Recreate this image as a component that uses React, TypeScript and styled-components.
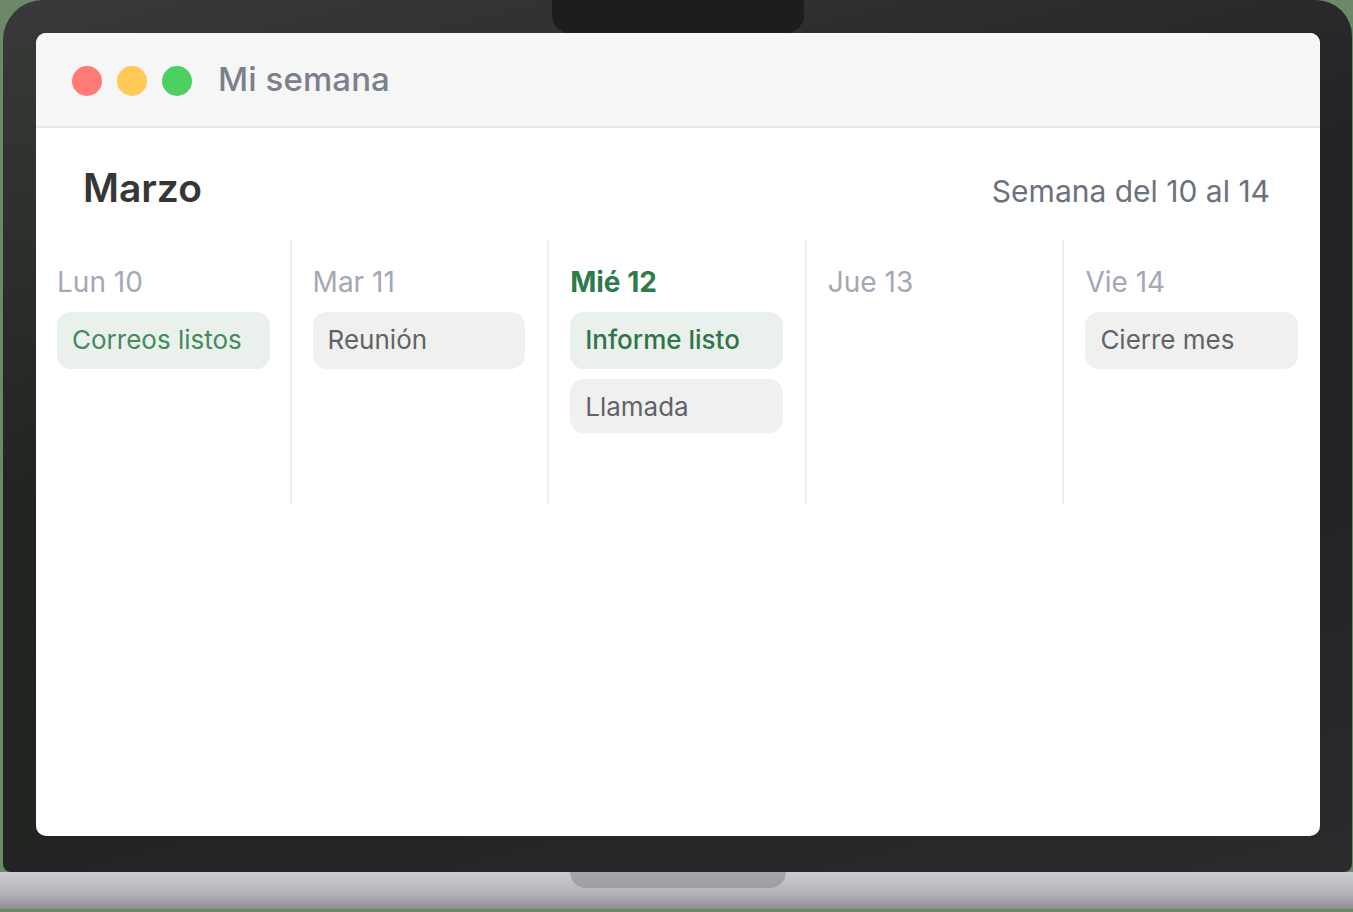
import React from "react";
import styled, { createGlobalStyle } from "styled-components";

const GlobalStyle = createGlobalStyle`
    html, body {
        margin: 0;
        padding: 0;
        background: #6b8966;
        font-family: Inter, "Noto Sans", "Liberation Sans", sans-serif;
    }
    #root {
        height: 912px;
        overflow: hidden;
    }
`;

const Laptop = styled.div`
    display: flex;
    flex-direction: column;
    height: 910px;
`;

const Lid = styled.div`
    position: relative;
    box-sizing: border-box;
    height: 872px;
    margin: 0 1px 0 3px;
    padding: 33px 32px 36px 33px;
    border-radius: 40px 36px 8px 8px;
    background: linear-gradient(165deg, #39393c 0%, #222224 42%, #232325 70%, #2b2b2d 100%);
    display: flex;
`;

const Notch = styled.div`
    position: absolute;
    top: 0;
    left: 50%;
    transform: translateX(-50%);
    width: 252px;
    height: 33px;
    background: #1d1d1f;
    border-radius: 0 0 18px 18px;
`;

const Screen = styled.div`
    flex: 1;
    display: flex;
    flex-direction: column;
    background: #ffffff;
    border-radius: 10px;
    overflow: hidden;
`;

const Base = styled.div`
    height: 37px;
    background: linear-gradient(to bottom, #cccbd0 0%, #b6b5bb 55%, #8e8d93 100%);
    display: flex;
    justify-content: center;
`;

const Groove = styled.div`
    width: 216px;
    height: 16px;
    margin-left: 3px;
    border-radius: 0 0 16px 16px;
    background: linear-gradient(to bottom, #a7a6ab, #9e9da2);
`;

const TitleBar = styled.div`
    display: flex;
    align-items: center;
    height: 95px;
    padding: 3px 36px 0;
    box-sizing: border-box;
    background: #f6f6f6;
    border-bottom: 2px solid #e6e6e6;
`;

const Light = styled.span<{ $color: string }>`
    width: 30px;
    height: 30px;
    border-radius: 50%;
    background: ${props => props.$color};
    & + & {
        margin-left: 15px;
    }
`;

const WindowTitle = styled.h1`
    margin: 0 0 5px 26px;
    font-size: 33px;
    font-weight: 500;
    color: #7b808c;
    letter-spacing: 0.1px;
`;

const Content = styled.div`
    display: flex;
    flex-direction: column;
    padding-top: 36px;
`;

const Header = styled.div`
    display: flex;
    justify-content: space-between;
    align-items: baseline;
    padding: 0 50px 0 47px;
`;

const Month = styled.h2`
    margin: 0;
    font-size: 39px;
    font-weight: 600;
    color: #363636;
`;

const Range = styled.span`
    font-size: 30px;
    color: #6b717d;
`;

const Week = styled.div`
    display: flex;
    height: 264px;
    margin-top: 29px;
`;

const Day = styled.div`
    flex: 1 1 0;
    min-width: 0;
    box-sizing: border-box;
    padding: 25px 20px 0 21px;

    & + & {
        border-left: 2px solid #ededed;
        padding: 25px 22px 0 21px;
    }
`;

const DayLabel = styled.div<{ $today?: boolean }>`
    margin-bottom: 13px;
    font-size: 28px;
    font-weight: ${props => props.$today ? 700 : 400};
    color: ${props => props.$today ? "#2e7a4c" : "#a3a8b4"};
`;

const Task = styled.div<{ $done?: boolean; $strong?: boolean }>`
    padding: 12px 15px 14px;
    border-radius: 14px;
    font-size: 26px;
    font-weight: ${props => props.$strong ? 500 : 400};
    background: ${props => props.$done ? "#eaf1ec" : "#f0f0ef"};
    color: ${props => props.$done ? (props.$strong ? "#2f7548" : "#458a5d") : "#5f636b"};
    white-space: nowrap;

    & + & {
        margin-top: 10px;
        padding-bottom: 11px;
    }
`;

type TaskItem = { label: string; done?: boolean };

type DayItem = { label: string; today?: boolean; tasks: Array<TaskItem> };

const days: Array<DayItem> = [
    { label: "Lun 10", tasks: [{ label: "Correos listos", done: true }] },
    { label: "Mar 11", tasks: [{ label: "Reunión" }] },
    { label: "Mié 12", today: true, tasks: [{ label: "Informe listo", done: true }, { label: "Llamada" }] },
    { label: "Jue 13", tasks: [] },
    { label: "Vie 14", tasks: [{ label: "Cierre mes" }] },
];

const App = (): JSX.Element =>
    <>
        <GlobalStyle />
        <Laptop>
            <Lid>
                <Notch />
                <Screen>
                    <TitleBar>
                        <Light $color="#ff7b76" />
                        <Light $color="#ffc956" />
                        <Light $color="#4dd062" />
                        <WindowTitle>Mi semana</WindowTitle>
                    </TitleBar>
                    <Content>
                        <Header>
                            <Month>Marzo</Month>
                            <Range>Semana del 10 al 14</Range>
                        </Header>
                        <Week>
                            { days.map(day =>
                                <Day key={day.label}>
                                    <DayLabel $today={day.today}>{day.label}</DayLabel>
                                    { day.tasks.map(task =>
                                        <Task key={task.label} $done={task.done} $strong={task.done && day.today}>
                                            {task.label}
                                        </Task>
                                    )}
                                </Day>
                            )}
                        </Week>
                    </Content>
                </Screen>
            </Lid>
            <Base>
                <Groove />
            </Base>
        </Laptop>
    </>

export default App;
